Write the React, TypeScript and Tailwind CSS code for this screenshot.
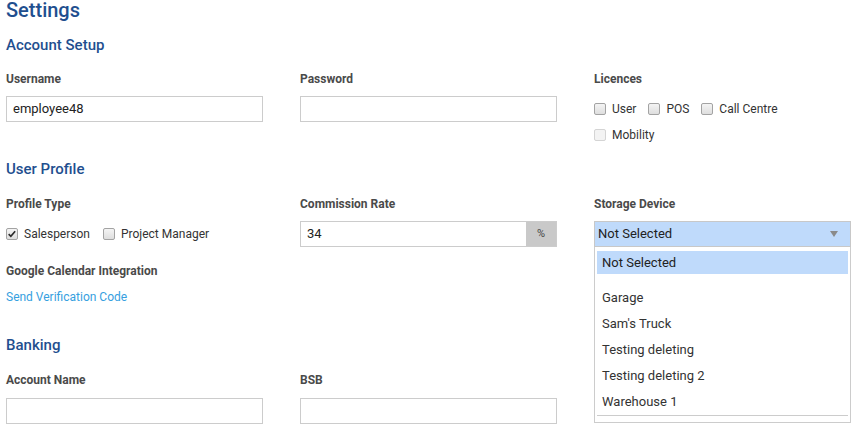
import React from "react";

const Label = ({ children }: { children: React.ReactNode }) => (
  <div className="text-[12px] leading-[16px] font-bold text-[#4a4a4a]">{children}</div>
);

const Input = ({ value, className = "" }: { value?: string; className?: string }) => (
  <div
    className={`h-[26px] border border-[#cccccc] bg-white px-[6px] flex items-center text-[13px] text-[#222] ${className}`}
  >
    {value}
  </div>
);

const Check = ({
  label,
  checked = false,
  disabled = false,
}: {
  label: string;
  checked?: boolean;
  disabled?: boolean;
}) => (
  <div className="flex items-center gap-[6px]">
    <span
      className={`relative w-[12px] h-[12px] rounded-[2px] border ${
        disabled
          ? "border-[#d4d4d4] bg-[#f3f3f3]"
          : "border-[#a3a3a3] bg-gradient-to-b from-[#f4f4f4] to-[#dedede]"
      }`}
    >
      {checked && (
        <svg viewBox="0 0 12 12" className="absolute left-[0px] top-[0px] w-[10px] h-[10px]">
          <path d="M2 6.2 L4.6 8.8 L9.8 2.6" fill="none" stroke="#2b2b2b" strokeWidth="2" />
        </svg>
      )}
    </span>
    <span className="text-[12px] text-[#333]">{label}</span>
  </div>
);

const Heading = ({ children, className = "" }: { children: React.ReactNode; className?: string }) => (
  <h2 className={`text-[15px] leading-[20px] font-medium text-[#1f4f8f] ${className}`}>{children}</h2>
);

export default function App() {
  const options = ["Garage", "Sam's Truck", "Testing deleting", "Testing deleting 2", "Warehouse 1"];
  return (
    <div className="w-[861px] h-[430px] overflow-hidden bg-white pl-[6px] font-['Roboto',sans-serif]">
      <h1 className="text-[20px] leading-[20px] font-medium text-[#1f4f8f]">Settings</h1>
      <Heading className="mt-[15px]">Account Setup</Heading>

      <div className="grid grid-cols-[257px_257px_257px] gap-x-[37px] mt-[16px]">
        <div>
          <Label>Username</Label>
          <Input value="employee48" className="mt-[9px]" />
        </div>
        <div>
          <Label>Password</Label>
          <Input className="mt-[9px]" />
        </div>
        <div>
          <Label>Licences</Label>
          <div className="mt-[9px] h-[26px] flex items-center gap-[12px]">
            <Check label="User" />
            <Check label="POS" />
            <Check label="Call Centre" />
          </div>
          <div className="h-[26px] flex items-center">
            <Check label="Mobility" disabled />
          </div>
        </div>
      </div>

      <Heading className="mt-[11px]">User Profile</Heading>

      <div className="grid grid-cols-[257px_257px_257px] gap-x-[37px] mt-[17px]">
        <div>
          <Label>Profile Type</Label>
          <div className="mt-[9px] h-[26px] flex items-center gap-[13px]">
            <Check label="Salesperson" checked />
            <Check label="Project Manager" />
          </div>
          <div className="mt-[16px]">
            <Label>Google Calendar Integration</Label>
          </div>
          <div className="mt-[10px] text-[12px] leading-[16px] text-[#36a0e0]">Send Verification Code</div>
        </div>
        <div>
          <Label>Commission Rate</Label>
          <div className="mt-[9px] h-[26px] flex border border-[#cccccc]">
            <div className="flex-1 px-[6px] flex items-center text-[13px] text-[#222]">34</div>
            <div className="w-[30px] bg-[#c9c9c9] flex items-center justify-center text-[11px] text-[#444]">%</div>
          </div>
        </div>
        <div className="relative z-10">
          <Label>Storage Device</Label>
          <div className="relative mt-[9px]">
            <div className="h-[26px] border border-[#c8c8c8] bg-[#bfdafb] pl-[3px] pr-[12px] flex items-center justify-between text-[13px] text-[#222]">
              <span>Not Selected</span>
              <svg viewBox="0 0 8 6" className="w-[8px] h-[6px]">
                <path d="M0 0 H8 L4 6 Z" fill="#8a8a8a" />
              </svg>
            </div>
            <div className="absolute left-0 top-full w-full bg-white border border-t-0 border-[#cccccc] px-[2px] pt-[4px] pb-[6px]">
              <div className="h-[23px] bg-[#bfdafb] pl-[5px] flex items-center text-[13px] text-[#222]">
                Not Selected
              </div>
              <div className="pt-[11px] border-b border-[#cccccc]">
                {options.map((o) => (
                  <div key={o} className="h-[26px] pl-[5px] flex items-center text-[13px] text-[#333]">
                    {o}
                  </div>
                ))}
              </div>
            </div>
          </div>
        </div>
      </div>

      <Heading className="mt-[30px]">Banking</Heading>

      <div className="grid grid-cols-[257px_257px_257px] gap-x-[37px] mt-[17px]">
        <div>
          <Label>Account Name</Label>
          <Input className="mt-[10px]" />
        </div>
        <div>
          <Label>BSB</Label>
          <Input className="mt-[10px]" />
        </div>
        <div />
      </div>
    </div>
  );
}
